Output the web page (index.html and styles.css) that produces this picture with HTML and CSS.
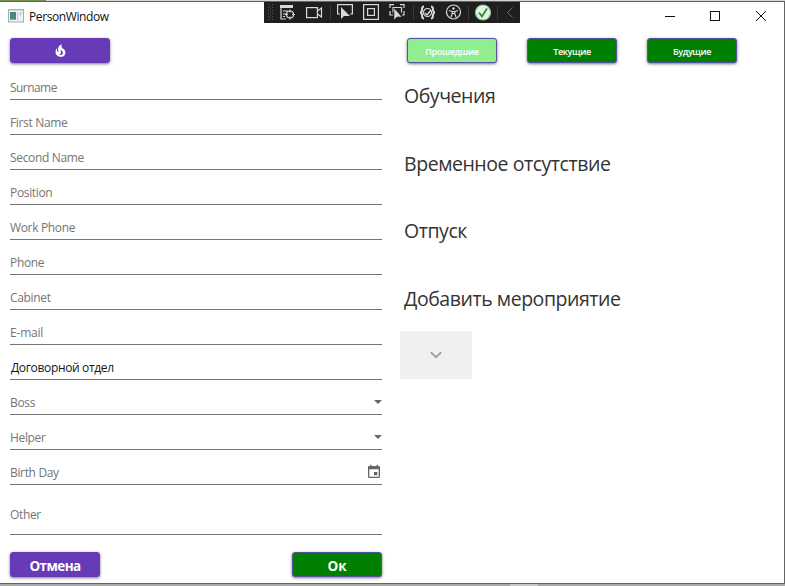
FILE: index.html
```html
<!DOCTYPE html>
<html lang="ru">
<head>
<meta charset="utf-8">
<title>PersonWindow</title>
<link rel="stylesheet" href="styles.css">
</head>
<body>
<div class="desktop">
<div class="window">
  <header class="titlebar">
    <svg class="app-icon" width="16" height="14" viewBox="0 0 16 14"><rect x=".5" y=".5" width="15" height="12.500" fill="#eef2f3" stroke="#a4afb3"/><path d="M1 1.500h14" stroke="#d5dde0"/><rect x="2" y="3" width="6" height="8" fill="#4c857f"/><path d="M2 10.500h6" stroke="#83aaa6"/><path d="M9.500 3v8" stroke="#c3cdcf"/><path d="M11 4l3-1-2 4z" fill="#b7c4c4"/></svg>
    <span class="title">PersonWindow</span>
    <div class="controls">
      <svg width="12" height="12" viewBox="0 0 12 12"><path d="M1 6.500h10"/></svg>
      <svg width="12" height="12" viewBox="0 0 12 12"><rect x="1.500" y="1.500" width="9" height="9"/></svg>
      <svg width="12" height="12" viewBox="0 0 12 12"><path d="M1 1l10 10M11 1L1 11"/></svg>
    </div>
  </header>
  <main class="content">
    <section class="form">
      <button class="btn btn-fire"><svg width="17" height="17" viewBox="0 0 24 24"><path fill="#fff" d="M17.660 11.200c-.230-.300-.510-.560-.770-.820-.670-.600-1.430-1.030-2.070-1.660C13.330 7.260 13 4.850 13.950 3c-.950.230-1.780.750-2.490 1.320-2.590 2.080-3.610 5.750-2.390 8.900.040.100.080.200.080.330 0 .220-.150.420-.350.500-.230.100-.470.040-.660-.120a.6.600 0 0 1-.140-.170c-1.130-1.430-1.310-3.480-.550-5.120C5.780 10 4.870 12.300 5 14.470c.060.500.120 1 .290 1.500.140.600.410 1.200.710 1.730 1.080 1.730 2.950 2.970 4.960 3.220 2.140.270 4.430-.120 6.070-1.600 1.830-1.660 2.470-4.320 1.530-6.600l-.130-.260c-.210-.460-.770-1.260-.770-1.260m-3.160 6.300c-.280.240-.740.500-1.100.600-1.120.400-2.240-.160-2.900-.820 1.190-.280 1.900-1.160 2.110-2.050.170-.800-.150-1.460-.280-2.230-.120-.740-.100-1.370.170-2.060.190.380.390.760.630 1.060.770 1 1.980 1.440 2.240 2.800.040.140.060.280.060.430.030.820-.330 1.720-.930 2.270"/></svg></button>
      <label class="field"><span class="w-surname">Surname</span></label>
      <label class="field"><span>First Name</span></label>
      <label class="field"><span>Second Name</span></label>
      <label class="field"><span>Position</span></label>
      <label class="field"><span>Work Phone</span></label>
      <label class="field"><span>Phone</span></label>
      <label class="field"><span>Cabinet</span></label>
      <label class="field"><span class="w-email">E-mail</span></label>
      <label class="field filled"><span>Договорной отдел</span></label>
      <label class="field"><span>Boss</span><svg class="arrow" width="8" height="4" viewBox="0 0 8 4"><path d="M0 0h8L4 4z" fill="#666"/></svg></label>
      <label class="field"><span>Helper</span><svg class="arrow" width="8" height="4" viewBox="0 0 8 4"><path d="M0 0h8L4 4z" fill="#666"/></svg></label>
      <label class="field"><span>Birth Day</span><svg class="calendar" width="16" height="16" viewBox="0 0 24 24"><path fill="#666" d="M19 19H5V8h14m-3-7v2H8V1H6v2H5c-1.110 0-2 .890-2 2v14a2 2 0 0 0 2 2h14a2 2 0 0 0 2-2V5a2 2 0 0 0-2-2h-1V1m-1 11h-5v5h5z"/></svg></label>
      <label class="field tall"><span>Other</span></label>
      <div class="actions">
        <button class="btn btn-main">Отмена</button>
        <button class="btn btn-main green">Ок</button>
      </div>
    </section>
    <section class="events">
      <div class="filters">
        <button class="btn green past">Прошедшие</button>
        <button class="btn green">Текущие</button>
        <button class="btn green">Будущие</button>
      </div>
      <h2>Обучения</h2>
      <h2>Временное отсутствие</h2>
      <h2>Отпуск</h2>
      <h2>Добавить мероприятие</h2>
      <div class="expander"><svg width="14" height="10" viewBox="0 0 14 10"><path d="M1.800 2.200L7 7.200l5.200-5" fill="none" stroke="#a2a2a2" stroke-width="2"/></svg></div>
    </section>
  </main>
</div>
<div class="taskline"></div>
<div class="debugbar">
<svg width="256" height="21" viewBox="0 0 256 21" fill="none" stroke="#d8d8d8" stroke-width="1.200">
  <path d="M4.500 2v17M8.500 2v17" stroke="#555" stroke-width="1" stroke-dasharray="1 2"/><path d="M6.500 3.500v15" stroke="#555" stroke-width="1" stroke-dasharray="1 2"/>
  <path d="M16 3h13v3H16z" fill="#d8d8d8" stroke="none"/><path d="M17 6v11h5M19 9h5M19 12h3M19 14.500h2"/><circle cx="26" cy="12.500" r="3.500"/><path d="M26 7.500v3M26 14.500v3M21 12.500h3M28 12.500h3"/>
  <rect x="42.600" y="5.600" width="10.800" height="10"/><path d="M53.500 9l4-3v9l-4-3"/>
  <path d="M66.500 4v14M149.500 4v14M204.500 4v14M233.500 4v14" stroke="#3b3b3b" stroke-width="1"/>
  <path d="M76 12h-2.400V2.600h14.800V12H86"/><path d="M77 5v12l3-3h6z" fill="#d8d8d8" stroke="none"/>
  <rect x="99.600" y="2.600" width="14.800" height="14.800"/><rect x="103.600" y="6.600" width="6.800" height="6.800"/>
  <path d="M126 6V2.600h4M136 2.600h4V6M140 9v4h-2M126 9v4h3"/><path d="M129 10.500V5.500h8.500v5"/><path d="M130 6v12l3-3h5z" fill="#d8d8d8" stroke="#1f1f1f" stroke-width=".5"/>
  <path d="M160 4.500q-2 0-2 3t-2 3q2 0 2 3t2 3M167 4.500q2 0 2 3t2 3q-2 0-2 3t-2 3" stroke-width="2"/><circle cx="163.500" cy="10.500" r="4"/><path d="M161 11l2 2 4-5" stroke-width="1.500"/>
  <circle cx="189.500" cy="10" r="7"/><circle cx="189.500" cy="6.500" r="1.200" fill="#d8d8d8" stroke="none"/><path d="M185 8.500l3 1h3l3-1M188.300 9.500v2l-1.500 4M190.700 9.500v2l1.500 4M188 11.500h3"/>
  <circle cx="219" cy="10.500" r="7.500" fill="#e4f2e3" stroke="#8dcc91"/><path d="M215 10.500l3 4 5-8" stroke="#258a32" stroke-width="1.800"/>
  <path d="M248.500 5.500l-5 5 5 5" stroke="#686868" stroke-width="1"/>
</svg>
</div>
</div>
</body>
</html>
```
FILE: styles.css
```css
* { box-sizing: border-box; }
body { margin: 0; width: 785px; height: 586px; overflow: hidden; font-family: "Open Sans", "Noto Sans", sans-serif; font-size: 12px; }
.desktop { position: relative; width: 785px; height: 586px; padding-top: 1px; background: linear-gradient(90deg, #71944b 46px, #d5d6d2 46px) top / 100% 1px no-repeat, #a9a9a9; }
.window { width: 785px; height: 583px; background: #fff; border: solid #646464; border-width: 1px 1px 1px 0; }
.titlebar { height: 28px; display: flex; align-items: center; padding: 0 17px 0 8px; }
.app-icon { margin-right: 5px; }
.title { color: #111; white-space: nowrap; letter-spacing: -.4px; }
.controls { margin-left: auto; display: flex; gap: 34px; }
.controls svg { fill: none; stroke: #111; stroke-width: 1; }
.controls svg:first-child { margin-right: -1px; }
.content { display: flex; padding: 8px 0 0 10px; }
.form { width: 372px; }
.btn { display: flex; align-items: center; justify-content: center; height: 25px; padding: 0; border: 1px solid #673ab7; border-radius: 3px; background: #673ab7; color: #fff; font: bold 13.500px "Open Sans", sans-serif; letter-spacing: -.600px; box-shadow: 0 1px 3px #0008; }
.btn-fire { width: 100px; margin-bottom: 2px; }
.green { background: #008000; border-color: #51549a; }
.field { display: flex; align-items: flex-end; justify-content: space-between; height: 35px; padding-bottom: 3px; border-bottom: 1px solid #777; color: #757575; line-height: 16px; white-space: nowrap; letter-spacing: -.340px; }
.w-surname { letter-spacing: -.550px; }
.w-email { letter-spacing: -.200px; }
.filled { color: #151515; padding-left: 1px; }
.tall { height: 50px; padding-bottom: 11px; }
.arrow { margin-bottom: 7px; }
.calendar { margin-bottom: 1px; }
.actions { display: flex; justify-content: space-between; padding-top: 17px; }
.btn-main { width: 90px; padding-top: 2px; }
.actions .green { letter-spacing: 0; }
.events { width: 345px; margin-left: 18px; }
.filters { display: flex; gap: 30px; margin: 0 0 17px 7px; }
.filters .btn { width: 90px; padding-top: 1px; font-size: 9px; font-weight: 600; letter-spacing: -.350px; }
.filters .past { background: #90ee90; }
h2 { margin: 0; height: 67.600px; padding-left: 4px; color: #333; font-size: 19.500px; line-height: 32px; font-weight: 400; letter-spacing: -.450px; white-space: nowrap; }
.expander { width: 72px; height: 48px; margin-top: -19px; display: flex; align-items: center; justify-content: center; background: #f0f0f0; }
.taskline { width: 28px; height: 2px; margin-left: 510px; background: #c8c8c8; }
.debugbar { position: absolute; left: 264px; top: 2px; width: 256px; height: 21px; background: #1f1f1f; }
.debugbar svg { display: block; }
```
